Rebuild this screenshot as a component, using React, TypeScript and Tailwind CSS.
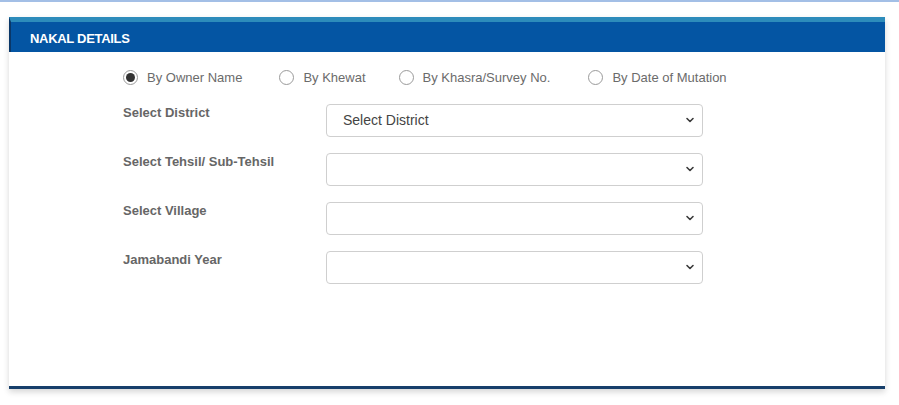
import { ChevronDown } from 'lucide-react'

const radios = [
  { label: 'By Owner Name', checked: true, gap: 'mr-[37px]' },
  { label: 'By Khewat', checked: false, gap: 'mr-[33px]' },
  { label: 'By Khasra/Survey No.', checked: false, gap: 'mr-[38px]' },
  { label: 'By Date of Mutation', checked: false, gap: '' },
]

const fields = [
  { label: 'Select District', value: 'Select District' },
  { label: 'Select Tehsil/ Sub-Tehsil', value: '' },
  { label: 'Select Village', value: '' },
  { label: 'Jamabandi Year', value: '' },
]

function Radio({ label, checked, gap }: { label: string; checked: boolean; gap: string }) {
  return (
    <label className={`flex items-center gap-[9px] text-[13px] text-[#6b6b6b] ${gap}`}>
      <span className="flex h-[15px] w-[15px] items-center justify-center rounded-full border border-[#9a9a9a] bg-white">
        {checked && <span className="h-[9px] w-[9px] rounded-full bg-[#333]" />}
      </span>
      {label}
    </label>
  )
}

function SelectBox({ value }: { value: string }) {
  return (
    <div className="flex h-[33px] w-[377px] items-center justify-between rounded-[4px] border border-[#cfcfcf] bg-white pl-4 pr-[6px] text-[14px] text-[#444]">
      <span>{value}</span>
      <ChevronDown size={12} strokeWidth={3.2} className="text-[#3a3a3a]" />
    </div>
  )
}

export default function App() {
  return (
    <div
      className="min-h-[405px] bg-white"
      style={{ fontFamily: '"Liberation Sans", Arial, sans-serif' }}
    >
      <div className="h-[2px] bg-[#a3bfe6]" />
      <div className="pt-[15px] pl-[9px] pr-[14px]">
        <div className="shadow-[0_3px_6px_rgba(0,0,0,0.16)]">
          <div className="flex h-[35px] items-center border-t-[5px] border-l-2 border-t-[#2d8cbb] border-l-[#0a3768] bg-[#0455a3] pt-[3px] pl-[19px]">
            <span className="text-[13px] font-bold tracking-[-0.3px] text-white">NAKAL DETAILS</span>
          </div>
          <div className="h-[337px] border-b-[3px] border-[#173f6b] bg-white pl-[114px]">
            <div className="flex items-center pt-[16px]">
              {radios.map((r) => (
                <Radio key={r.label} label={r.label} checked={r.checked} gap={r.gap} />
              ))}
            </div>
            <div className="mt-[16px] flex flex-col gap-[16px]">
              {fields.map((f) => (
                <div key={f.label} className="flex items-start">
                  <div className="w-[203px] pt-[1px] text-[13px] font-bold leading-[16px] text-[#666]">
                    {f.label}
                  </div>
                  <SelectBox value={f.value} />
                </div>
              ))}
            </div>
          </div>
        </div>
      </div>
    </div>
  )
}
